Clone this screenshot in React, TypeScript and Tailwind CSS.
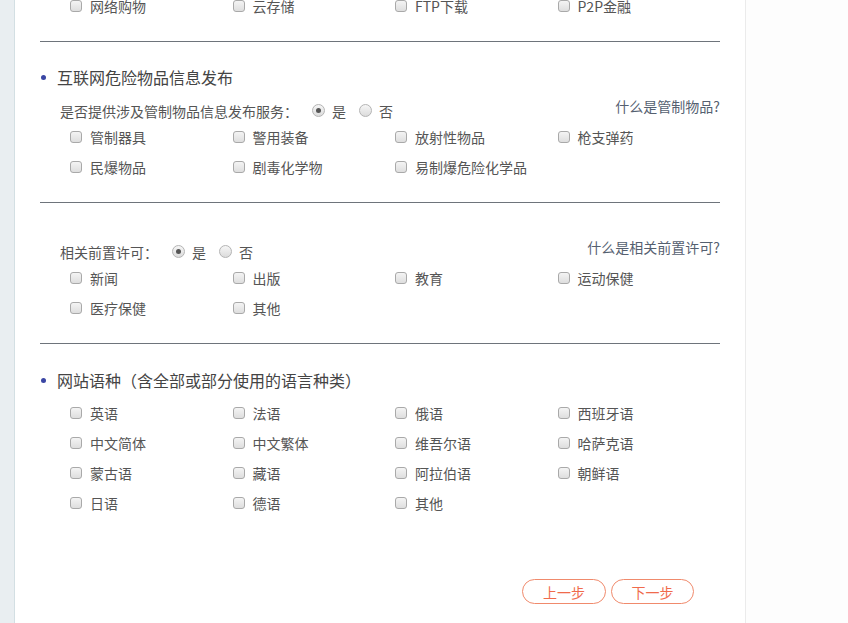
const font = { fontFamily: '"Noto Sans CJK SC", "Liberation Sans", sans-serif' }

function Checkbox({ label }: { label: string }) {
  return (
    <label className="flex h-[30px] items-center text-[14px] text-[#555]">
      <span className="box-border h-[12px] w-[12px] rounded-[3px] border border-[#a9a9a9] bg-gradient-to-b from-[#f4f4f4] to-[#dedede]" />
      <span className="ml-[8px] whitespace-nowrap leading-none">{label}</span>
    </label>
  )
}

function Radio({ checked, label }: { checked?: boolean; label: string }) {
  return (
    <span className="flex items-center">
      <span className="box-border flex h-[13px] w-[13px] items-center justify-center rounded-full border border-[#b4b4b4] bg-gradient-to-b from-[#f6f6f6] to-[#dcdcdc]">
        {checked && <span className="h-[5px] w-[5px] rounded-full bg-[#555]" />}
      </span>
      <span className="ml-[7px] leading-none">{label}</span>
    </span>
  )
}

function CheckGrid({ items }: { items: string[] }) {
  return (
    <div className="grid grid-cols-[162.5px_162.5px_162.5px_162.5px] pl-[30px]">
      {items.map((it) => (
        <Checkbox key={it} label={it} />
      ))}
    </div>
  )
}

function Divider({ className }: { className: string }) {
  return <div className={`h-px w-[680px] bg-[#6e747b] ${className}`} />
}

function SectionTitle({ text, className }: { text: string; className: string }) {
  return (
    <div className={`flex h-[30px] items-center ${className}`}>
      <span className="ml-[1px] h-[5px] w-[5px] rounded-full bg-[#3a46a4]" />
      <span className="ml-[11px] text-[16px] leading-none text-[#444]">{text}</span>
    </div>
  )
}

function RadioRow({ question, link, className }: { question: string; link: string; className: string }) {
  return (
    <div className={`flex h-[23px] items-center justify-between pl-[20px] text-[14px] text-[#555] ${className}`}>
      <div className="flex items-center">
        <span className="leading-none">{question}</span>
        <span className="ml-[14px]">
          <Radio checked label="是" />
        </span>
        <span className="ml-[13px]">
          <Radio label="否" />
        </span>
      </div>
      <a className="mb-[10px] leading-none text-[#556070]">{link}</a>
    </div>
  )
}

export default function App() {
  return (
    <div className="flex h-[623px] overflow-hidden bg-[#fdfdfd]" style={font}>
      <div className="w-[14px] shrink-0 bg-[#e9eef1]" />
      <div className="w-[732px] shrink-0 border-l border-r border-l-[#d3dfe3] border-r-[#ebebeb] bg-white">
        <div className="ml-[25px] w-[680px]">
          <div className="-mt-[9px]">
            <CheckGrid items={['网络购物', '云存储', 'FTP下载', 'P2P金融']} />
          </div>
          <Divider className="mt-[20px]" />

          <SectionTitle text="互联网危险物品信息发布" className="mt-[20px]" />
          <RadioRow question="是否提供涉及管制物品信息发布服务：" link="什么是管制物品?" className="mt-[7px]" />
          <CheckGrid items={['管制器具', '警用装备', '放射性物品', '枪支弹药', '民爆物品', '剧毒化学物', '易制爆危险化学品']} />
          <Divider className="mt-[20px]" />

          <RadioRow question="相关前置许可：" link="什么是相关前置许可?" className="mt-[37px]" />
          <CheckGrid items={['新闻', '出版', '教育', '运动保健', '医疗保健', '其他']} />
          <Divider className="mt-[20px]" />

          <SectionTitle text="网站语种（含全部或部分使用的语言种类）" className="mt-[21px]" />
          <div className="mt-[3px]">
            <CheckGrid
              items={['英语', '法语', '俄语', '西班牙语', '中文简体', '中文繁体', '维吾尔语', '哈萨克语', '蒙古语', '藏语', '阿拉伯语', '朝鲜语', '日语', '德语', '其他']}
            />
          </div>

          <div className="mt-[61px] flex justify-end gap-[5px] pr-[26px]">
            <button className="h-[25px] w-[84px] rounded-full border border-[#f08a6c] bg-white text-[14px] leading-none text-[#f06b4c]">
              上一步
            </button>
            <button className="h-[25px] w-[83px] rounded-full border border-[#f08a6c] bg-white text-[14px] leading-none text-[#f06b4c]">
              下一步
            </button>
          </div>
        </div>
      </div>
      <div className="flex-1" />
    </div>
  )
}
